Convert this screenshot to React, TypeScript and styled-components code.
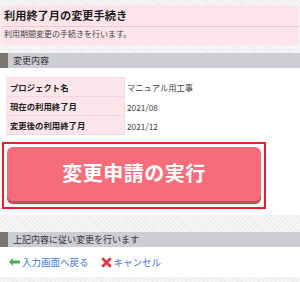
import { Fragment } from "react";
import styled, { createGlobalStyle } from "styled-components";

const GlobalStyle = createGlobalStyle`
  html, body {
    margin: 0;
    padding: 0;
  }

  body {
    width: 300px;
    height: 282px;
    overflow: hidden;
    font-family: "Noto Sans CJK JP", "Noto Sans", sans-serif;
    color: #333333;
    background: repeating-linear-gradient(
      45deg,
      #ececec 0px,
      #ececec 1px,
      #f6f6f6 1px,
      #f6f6f6 3px
    );
  }
`;

const Page = styled.div`
  padding-top: 5px;
`;

const Intro = styled.div`
  background-color: #fce4ea;
  border-radius: 4px;
  padding-top: 2px;
  margin: 0 1px;
`;

const Title = styled.h1`
  margin: 0;
  padding: 0 3px 3px;
  font-size: 11.2px;
  line-height: 16px;
  font-weight: bold;
  color: #1e1e1e;
  border-bottom: 1px solid #e9ccd3;
`;

const Lead = styled.p`
  margin: 0;
  padding: 1px 3px 5px;
  font-size: 8px;
  line-height: 12px;
  color: #444444;
`;

const Section = styled.section<{ gap: number }>`
  margin-top: ${(props) => props.gap}px;
`;

const SectionHeader = styled.div`
  display: flex;
  align-items: center;
  height: 15px;
  background-color: #cdced3;
  font-size: 9px;
  color: #333333;

  &::before {
    content: "";
    align-self: stretch;
    width: 8px;
    margin-right: 5px;
    background-color: #7b766f;
  }
`;

const SectionBody = styled.div`
  background-color: #ffffff;
`;

const InfoTable = styled.div`
  display: grid;
  grid-template-columns: 119px 1fr;
  padding: 9px 0 0 6px;
`;

const Label = styled.div<{ first?: boolean }>`
  display: flex;
  align-items: center;
  height: ${(props) => (props.first ? 20 : 19)}px;
  box-sizing: border-box;
  padding-left: 4px;
  background-color: #fde6eb;
  border-top: ${(props) => (props.first ? "1px solid #f7d7de" : "0")};
  border-bottom: 1px solid #f7d7de;
  border-right: 1px solid #f7d7de;
  font-size: 8.4px;
  font-weight: bold;
  color: #222222;
`;

const Value = styled.div<{ first?: boolean }>`
  display: flex;
  align-items: center;
  height: ${(props) => (props.first ? 20 : 19)}px;
  padding-left: 2px;
  font-size: 8.3px;
  color: #444444;
`;

const Highlight = styled.div`
  width: 254px;
  margin: 7px 0 0 2px;
  padding: 3px;
  border: 2px solid #e2232f;
`;

const ExecuteButton = styled.button`
  display: block;
  width: 100%;
  height: 54px;
  margin-bottom: 3px;
  border: 0;
  border-radius: 6px;
  background-color: #f76c7b;
  box-shadow: 0 3px 0 #c44b59, 0 4px 2px rgba(0, 0, 0, 0.15);
  font-family: inherit;
  font-size: 20px;
  font-weight: bold;
  color: #ffffff;
  letter-spacing: 0.5px;
  padding: 0 0 4px;
  cursor: pointer;
`;

const Spacer = styled.div`
  height: 6px;
`;

const Links = styled.div`
  display: flex;
  align-items: center;
  gap: 12px;
  height: 30px;
  padding-left: 9px;
`;

const ActionLink = styled.a`
  display: flex;
  align-items: center;
  gap: 2px;
  font-size: 9.5px;
  color: #3d77d6;
  text-decoration: none;
  cursor: pointer;
`;

function BackArrow() {
  return (
    <svg width="11" height="8" viewBox="0 0 11 8">
      <polygon points="0,4 4,0 4,2.5 11,2.5 11,5.5 4,5.5 4,8" fill="#4dae52" />
    </svg>
  );
}

function CrossMark() {
  return (
    <svg width="11" height="11" viewBox="0 0 11 11">
      <path
        d="M2 2 L9 9 M9 2 L2 9"
        stroke="#e2343b"
        strokeWidth="2.8"
        strokeLinecap="round"
      />
    </svg>
  );
}

const rows = [
  { label: "プロジェクト名", value: "マニュアル用工事" },
  { label: "現在の利用終了月", value: "2021/08" },
  { label: "変更後の利用終了月", value: "2021/12" },
];

function App() {
  return (
    <>
      <GlobalStyle />
      <Page>
        <Intro>
          <Title>利用終了月の変更手続き</Title>
          <Lead>利用期間変更の手続きを行います。</Lead>
        </Intro>

        <Section gap={8}>
          <SectionHeader>変更内容</SectionHeader>
          <SectionBody>
            <InfoTable>
              {rows.map((row, i) => (
                <Fragment key={row.label}>
                  <Label first={i === 0}>{row.label}</Label>
                  <Value first={i === 0}>{row.value}</Value>
                </Fragment>
              ))}
            </InfoTable>
            <Highlight>
              <ExecuteButton>変更申請の実行</ExecuteButton>
            </Highlight>
            <Spacer />
          </SectionBody>
        </Section>

        <Section gap={17}>
          <SectionHeader>上記内容に従い変更を行います</SectionHeader>
          <SectionBody>
            <Links>
              <ActionLink>
                <BackArrow />
                入力画面へ戻る
              </ActionLink>
              <ActionLink>
                <CrossMark />
                キャンセル
              </ActionLink>
            </Links>
          </SectionBody>
        </Section>
      </Page>
    </>
  );
}

export default App;
